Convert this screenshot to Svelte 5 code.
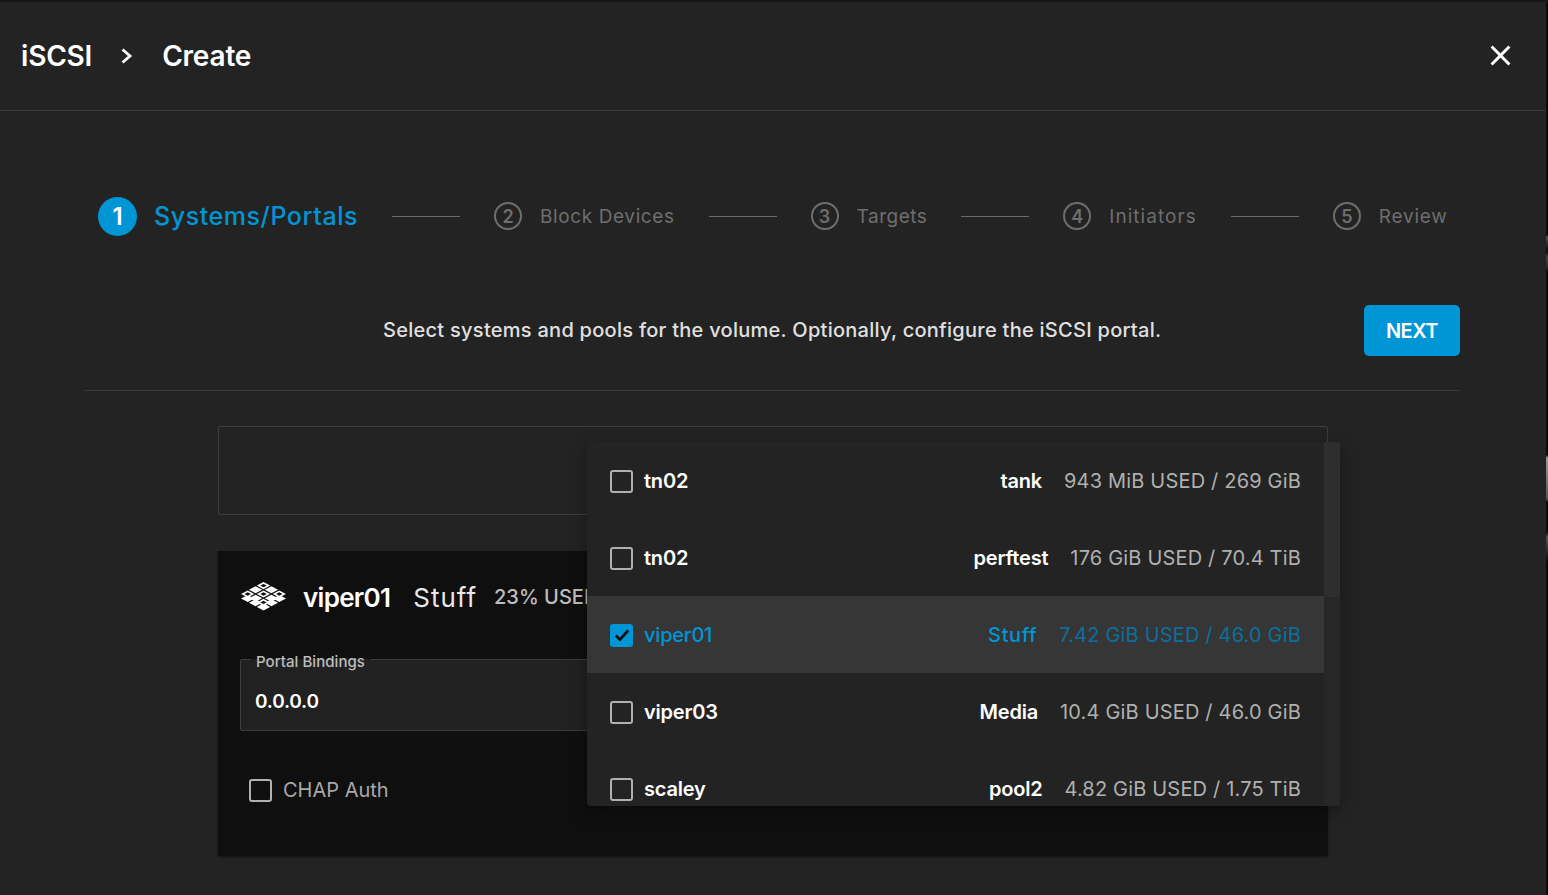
<script lang="ts">
	const steps = [
		{ n: 2, label: 'Block Devices', track: 0.6 },
		{ n: 3, label: 'Targets', track: 0.5 },
		{ n: 4, label: 'Initiators', track: 1.05 },
		{ n: 5, label: 'Review', track: 0.75 }
	];
	const pools = [
		{ host: 'tn02', pool: 'tank', usage: '943 MiB USED / 269 GiB', on: false },
		{ host: 'tn02', pool: 'perftest', usage: '176 GiB USED / 70.4 TiB', on: false },
		{ host: 'viper01', pool: 'Stuff', usage: '7.42 GiB USED / 46.0 GiB', on: true },
		{ host: 'viper03', pool: 'Media', usage: '10.4 GiB USED / 46.0 GiB', on: false },
		{ host: 'scaley', pool: 'pool2', usage: '4.82 GiB USED / 1.75 TiB', on: false }
	];

	// logo: 3x3 isometric tiles, every other one with a hole, front row extruded
	const iso = (u: number, v: number, dy = 0) => `${(23.5 + (u - v) * 7.9).toFixed(2)},${(13 + dy + (u + v) * 4.2).toFixed(2)}`;
	const quad = (a: number, b: number, r: number, dy = 0) =>
		[iso(a - r, b - r, dy), iso(a + r, b - r, dy), iso(a + r, b + r, dy), iso(a - r, b + r, dy)].join(' ');
	const cells: { tile: string; side: string | null; hole: string | null }[] = [];
	for (let a = -1; a <= 1; a++) {
		for (let b = -1; b <= 1; b++) {
			cells.push({
				tile: quad(a, b, 0.42),
				side: a === 1 || b === 1 ? quad(a, b, 0.42, 4.5) : null,
				hole: (a + b) % 2 === 0 ? quad(a, b, 0.2) : null
			});
		}
	}
</script>

<div class="page">
	<header class="top">
		<div class="crumbs">
			<span>iSCSI</span>
			<svg class="chev" viewBox="0 0 12 16" width="12" height="16"><path d="M1.500 1.500 9 8l-7.500 6.500" fill="none" stroke="#fff" stroke-width="2.800" /></svg>
			<span>Create</span>
		</div>
		<svg class="close" viewBox="0 0 20 20" width="21" height="21"><path d="M1.500 1.500l17 17M18.500 1.500l-17 17" fill="none" stroke="#fff" stroke-width="2.800" /></svg>
	</header>

	<div class="wizard">
		<nav class="stepper">
			<div class="step active">
				<span class="num">1</span>
				<span class="label">Systems/Portals</span>
			</div>
			{#each steps as s}
				<span class="line"></span>
				<div class="step">
					<span class="num">{s.n}</span>
					<span class="label" style="letter-spacing: {s.track}px">{s.label}</span>
				</div>
			{/each}
		</nav>

		<div class="intro">
			<p>Select systems and pools for the volume. Optionally, configure the iSCSI portal.</p>
			<button class="next">NEXT</button>
		</div>

		<div class="body">
			<div class="select-box"></div>
			<section class="card">
				<div class="card-head">
					<svg class="logo" viewBox="0 0 47 32" width="47" height="32">
						{#each cells as c}
							{#if c.side}<polygon points={c.side} fill="#fff" />{/if}
						{/each}
						{#each cells as c}
							<polygon points={c.tile} fill="#fff" />
							{#if c.hole}<polygon points={c.hole} fill="#0f0f0f" />{/if}
						{/each}
					</svg>
					<span class="host">viper01</span>
					<span class="pool">Stuff</span>
					<span class="used">23% USED</span>
				</div>
				<fieldset class="bindings">
					<legend>Portal Bindings</legend>
					<span>0.0.0.0</span>
				</fieldset>
				<label class="chap">
					<span class="check"></span>
					<span>CHAP Auth</span>
				</label>
			</section>

			<div class="menu">
				<ul>
					{#each pools as p}
						<li class:on={p.on}>
							<span class="check" class:checked={p.on}>
								{#if p.on}
									<svg viewBox="0 0 16 16" width="18" height="18"><path d="M2.500 8.500 6.200 12l7.300-8" fill="none" stroke="#111" stroke-width="2.400" /></svg>
								{/if}
							</span>
							<span class="row-host">{p.host}</span>
							<span class="row-pool">{p.pool}</span>
							<span class="row-usage">{p.usage}</span>
						</li>
					{/each}
				</ul>
				<div class="scroll"><div class="thumb"></div></div>
			</div>
		</div>
	</div>
	<div class="edge"></div>
</div>

<style>
	:global(body) {
		margin: 0;
		background: #232323;
		font-family: Inter, 'Open Sans', sans-serif;
	}
	.page {
		position: relative;
		height: 895px;
		overflow: hidden;
		background: #232323;
		color: #fff;
		border-top: 2px solid #161616;
		box-sizing: border-box;
	}
	.edge {
		position: absolute;
		top: 0;
		right: 0;
		bottom: 0;
		width: 2px;
		background: linear-gradient(
			#0a0a0a 233px,
			#555 235px,
			#333 240px,
			#0a0a0a 250px,
			#444 255px,
			#2a2a2a 265px,
			#0a0a0a 270px,
			#0a0a0a 453px,
			#999 456px,
			#555 497px,
			#0a0a0a 500px,
			#0a0a0a 530px,
			#555 535px,
			#0a0a0a 560px
		);
	}
	.top {
		display: flex;
		align-items: center;
		justify-content: space-between;
		height: 108px;
		padding: 0 37px 0 21px;
		border-bottom: 1px solid #383838;
	}
	.close {
		margin-top: -2px;
	}
	.crumbs {
		display: flex;
		align-items: center;
		gap: 29px;
		font-size: 28px;
		font-weight: 600;
		letter-spacing: -0.2px;
	}
	.wizard {
		padding: 0 88px 0 84px;
	}
	.stepper {
		display: flex;
		align-items: center;
		gap: 34px;
		margin-top: 85px;
		padding: 0 14px;
		height: 40px;
	}
	.step {
		display: flex;
		align-items: center;
		gap: 18px;
		font-size: 19px;
		color: #6e6e6e;
		white-space: nowrap;
	}
	.num {
		display: flex;
		align-items: center;
		justify-content: center;
		box-sizing: border-box;
		width: 28px;
		height: 28px;
		border: 2px solid #6e6e6e;
		border-radius: 50%;
		font-size: 18px;
		font-weight: 600;
	}
	.step.active {
		gap: 17px;
		color: #0095d5;
		font-size: 25px;
		font-weight: 500;
		letter-spacing: 0.57px;
	}
	.step.active .num {
		width: 39px;
		height: 39px;
		border: 0;
		background: #0095d5;
		color: #fff;
		font-size: 24px;
		letter-spacing: 0;
	}
	.line {
		flex: 0 0 68px;
		height: 1px;
		background: #6a6a6a;
	}
	.intro {
		position: relative;
		display: flex;
		align-items: center;
		justify-content: flex-end;
		height: 51px;
		margin-top: 69px;
		padding-bottom: 34px;
		border-bottom: 1px solid #383838;
	}
	.intro p {
		position: absolute;
		left: 299px;
		top: 13px;
		margin: 0;
		font-size: 20px;
		font-weight: 500;
		letter-spacing: 0.27px;
		color: #e0e0e0;
		white-space: nowrap;
	}
	.next {
		width: 96px;
		height: 51px;
		border: 0;
		border-radius: 5px;
		background: #0095d5;
		color: #fff;
		font: 600 20px Inter, sans-serif;
		letter-spacing: -0.5px;
	}
	.body {
		position: relative;
		padding: 35px 0 0 134px;
		width: 1110px;
	}
	.select-box {
		box-sizing: border-box;
		height: 89px;
		border: 1px solid #3d3d3d;
		border-radius: 2px;
	}
	.card {
		box-sizing: border-box;
		height: 305px;
		margin-top: 36px;
		padding: 27px 22px;
		background: #0f0f0f;
		box-shadow: 0 1px 2px rgba(0, 0, 0, 0.5);
	}
	.card-head {
		display: flex;
		align-items: center;
		gap: 16px;
		height: 38px;
		white-space: nowrap;
	}
	.host {
		font-size: 26px;
		font-weight: 600;
		letter-spacing: -0.7px;
	}
	.pool {
		margin-left: 7px;
		font-size: 26px;
		letter-spacing: 1px;
		color: #e8e8e8;
	}
	.used {
		margin-left: 1px;
		font-size: 20px;
		font-weight: 500;
		color: #bdbdbd;
	}
	.bindings {
		box-sizing: border-box;
		height: 84px;
		margin: 31px 0 0;
		padding: 0 14px 2px;
		background: #212121;
		border: 1px solid #3d3d3d;
		border-radius: 2px;
		font-size: 19px;
		font-weight: 600;
		letter-spacing: -0.2px;
	}
	.bindings legend {
		padding: 5px 6px 0 5px;
		margin-left: -4px;
		font-size: 15px;
		font-weight: 500;
		letter-spacing: 0.05px;
		color: #bdbdbd;
	}
	.bindings span {
		display: block;
		margin-top: 19px;
	}
	.chap {
		display: flex;
		align-items: center;
		gap: 11px;
		margin: 47px 0 0 9px;
		font-size: 20px;
		color: #a8a8a8;
	}
	.check {
		display: flex;
		align-items: center;
		justify-content: center;
		box-sizing: border-box;
		flex: none;
		width: 23px;
		height: 23px;
		border: 2.500px solid #b0b0b0;
		border-radius: 3px;
	}
	.check.checked {
		border: 0;
		background: #0095d5;
	}
	.menu {
		position: absolute;
		left: 503px;
		top: 51px;
		display: flex;
		width: 753px;
		height: 364px;
		background: #232323;
		border-radius: 0 0 4px 4px;
		overflow: hidden;
		box-shadow: 0 6px 18px rgba(0, 0, 0, 0.35);
	}
	.menu ul {
		flex: 1;
		margin: 0;
		padding: 0;
		list-style: none;
	}
	.menu li {
		display: flex;
		align-items: center;
		box-sizing: border-box;
		height: 77px;
		padding: 1px 23px 0;
		font-size: 20px;
		font-weight: 600;
		letter-spacing: -0.2px;
	}
	.menu li.on {
		background: #363636;
		color: #0095d5;
		font-weight: 500;
	}
	.on .row-pool {
		letter-spacing: 0.6px;
	}
	.row-host {
		margin-left: 11px;
	}
	.row-pool {
		margin-left: auto;
	}
	.row-usage {
		margin-left: 22px;
		font-weight: 400;
		letter-spacing: 0.18px;
		color: #b0b0b0;
	}
	.on .row-usage {
		color: #0b6f9e;
	}
	.scroll {
		flex: 0 0 16px;
		background: #272727;
	}
	.thumb {
		height: 155px;
		background: #2e2e2e;
	}
</style>
